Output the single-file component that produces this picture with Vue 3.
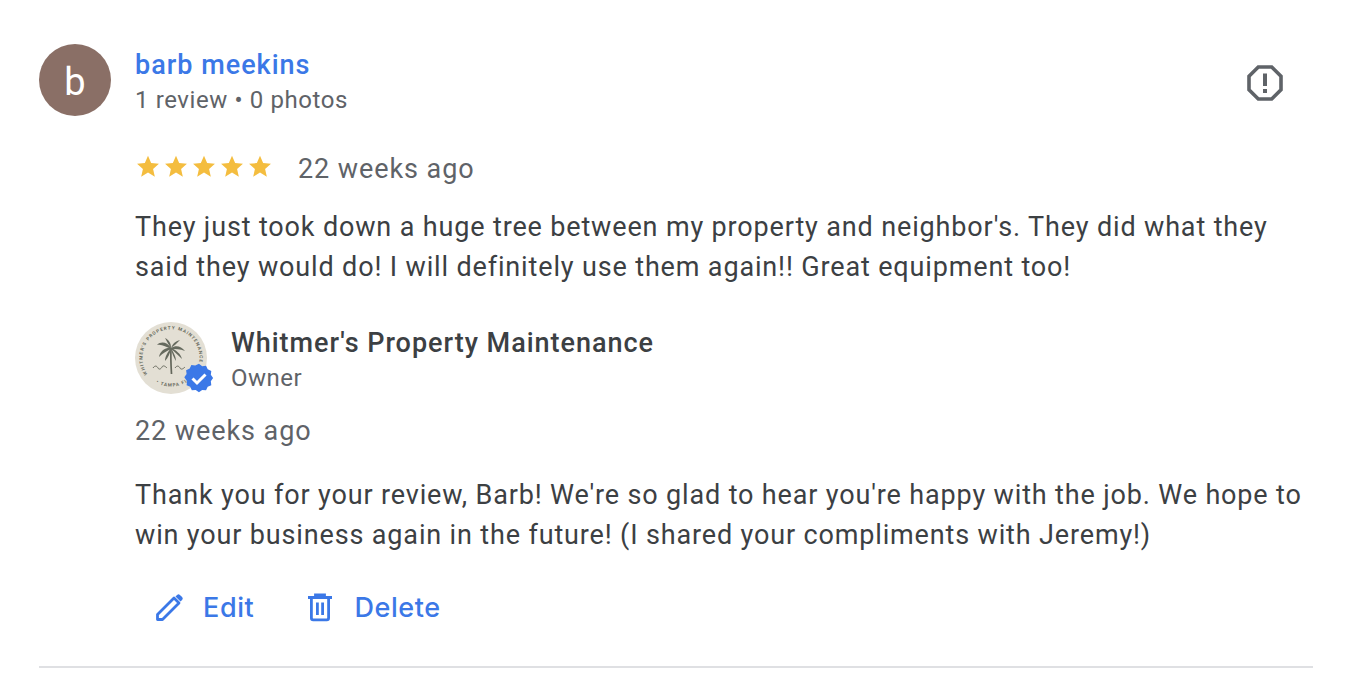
<script setup>
const stars = [0, 1, 2, 3, 4]
const starPath = 'M12 2.6l2.9 6.7 7.2.7-5.4 4.8 1.6 7.1L12 17.9l-6.3 4 1.6-7.1L1.9 10l7.2-.7z'
</script>

<template>
  <div class="page">
    <article class="review">
      <header class="head">
        <div class="avatar">b</div>
        <div class="who">
          <a class="name">barb meekins</a>
          <div class="meta">1 review • 0 photos</div>
        </div>
        <svg class="flag" viewBox="0 0 36 36" width="36" height="36">
          <path d="M11.3 2h13.4L34 11.3v13.4L24.7 34H11.3L2 24.7V11.3z" fill="none" stroke="#5f6368" stroke-width="3.6" />
          <rect x="16" y="8.5" width="4" height="12.5" fill="#5f6368" />
          <rect x="16" y="24" width="4" height="4" fill="#5f6368" />
        </svg>
      </header>

      <div class="body">
        <div class="rating">
          <div class="stars">
            <svg v-for="s in stars" :key="s" viewBox="0 0 24 24" width="26" height="26">
              <path :d="starPath" fill="#f4bd3f" />
            </svg>
          </div>
          <span class="when">22 weeks ago</span>
        </div>

        <p class="text">They just took down a huge tree between my property and neighbor's. They did what they said they would do! I will definitely use them again!! Great equipment too!</p>

        <div class="owner">
          <div class="logo">
            <svg viewBox="0 0 72 72" width="72" height="72">
              <defs>
                <path id="ring-top" d="M12.5 52A28.5 28.5 0 1 1 59.5 52" />
                <path id="ring-bottom" d="M18 58.5A29.5 29.5 0 0 0 54 58.5" />
              </defs>
              <circle cx="36" cy="36" r="36" fill="#e3dfd4" />
              <text class="ring-text"><textPath href="#ring-top" startOffset="0">WHITMER'S PROPERTY MAINTENANCE</textPath><textPath href="#ring-bottom" startOffset="10%">• TAMPA FL</textPath></text>
              <g opacity="0.85">
                <path d="M36.5 52 C36 44 35.5 36 36 26" stroke="#4f5347" stroke-width="1.7" fill="none" />
                <path d="M36 26 C32 20 26 19 22 23 C27 22 31 25 36 27Z M36 26 C31 25 25 29 24 35 C28 31 32 29 36 27Z M36 26 C33 30 30 34 30 39 C33 36 35 31 36 27Z M36 26 C36 21 34 18 30 16 C32 20 34 23 36 26Z M36 26 C38 21 41 19 45 18 C42 21 39 24 36 26Z M36 26 C41 23 46 24 50 29 C45 27 40 27 36 27Z M36 26 C41 28 46 32 47 37 C43 33 40 30 36 27Z M36 26 C38 30 41 34 41 39 C39 36 37 31 36 27Z" fill="#50564a" />
              </g>
              <path d="M18 46c2-3 4-2 5 0s3 1 4-1 3-1 5 1M40 46c2-3 4-2 5 0s3 1 5-1" fill="none" stroke="#6a6c60" stroke-width="1" />
            </svg>
            <svg class="badge" viewBox="0 0 30 30" width="30" height="30">
              <path d="M15 .8l3.4 2.4 4.1-.5 1.7 3.8 3.8 1.7-.5 4.1 2.4 3.4-2.4 3.4.5 4.1-3.8 1.7-1.7 3.8-4.1-.5-3.4 2.4-3.4-2.4-4.1.5-1.7-3.8-3.8-1.7.5-4.1L-.4 15l2.4-3.4-.5-4.1 3.8-1.7 1.7-3.8 4.1.5z" fill="#3b78e7" transform="translate(.7 .1) scale(.95)" />
              <path d="M8.5 15.5l4.5 4.5 8.5-8.5" fill="none" stroke="#fff" stroke-width="3" />
            </svg>
          </div>
          <div class="owner-who">
            <div class="biz">Whitmer's Property Maintenance</div>
            <div class="role">Owner</div>
          </div>
        </div>

        <div class="reply-when">22 weeks ago</div>

        <p class="text reply">Thank you for your review, Barb! We're so glad to hear you're happy with the job. We hope to win your business again in the future! (I shared your compliments with Jeremy!)</p>

        <div class="actions">
          <button class="action">
            <svg viewBox="0 0 32 32" width="32" height="32">
              <path d="M4.5 28.5v-5L21 7l5 5L9.5 28.5z" fill="none" stroke="#3b78e7" stroke-width="2.8" stroke-linejoin="round" />
              <path d="M22.5 5.5l1.6-1.6a2 2 0 0 1 2.8 0l2.2 2.2a2 2 0 0 1 0 2.8l-1.6 1.6z" fill="#3b78e7" />
            </svg>
            <span class="label">Edit</span>
          </button>
          <button class="action">
            <svg viewBox="0 0 32 32" width="32" height="32">
              <path d="M7.4 8v19a1.8 1.8 0 0 0 1.8 1.8h13.6a1.8 1.8 0 0 0 1.8-1.8V8" fill="none" stroke="#3b78e7" stroke-width="2.8" />
              <path d="M4 6.5h24M11.5 6.5V4h9v2.5M13.4 11.5v12.5M18.6 11.5v12.5" fill="none" stroke="#3b78e7" stroke-width="2.8" />
            </svg>
            <span class="label">Delete</span>
          </button>
        </div>
      </div>
    </article>
  </div>
</template>

<style>
html, body { margin: 0; background: #fff; }
</style>

<style scoped>
.page {
  width: 1357px;
  height: 686px;
  overflow: hidden;
  box-sizing: border-box;
  padding: 44px 44px 0 39px;
  font-family: Roboto, "Liberation Sans", sans-serif;
  color: #3c4043;
}
.review {
  height: 624px;
  box-sizing: border-box;
  border-bottom: 2px solid #dfe0e3;
}
.head {
  display: flex;
  align-items: flex-start;
  height: 72px;
}
.avatar {
  width: 72px;
  height: 72px;
  flex: none;
  border-radius: 50%;
  background: #8a6f66;
  color: #fff;
  font-size: 38px;
  line-height: 76px;
  text-align: center;
}
.who {
  margin-left: 24px;
  flex: 1;
  min-width: 0;
}
.name {
  display: block;
  margin-top: 1px;
  color: #3b78e7;
  font-size: 27px;
  font-weight: 500;
  line-height: 40px;
  letter-spacing: 1px;
}
.meta {
  margin-top: -3px;
  color: #5f6368;
  font-size: 24px;
  line-height: 36px;
  letter-spacing: 0.6px;
}
.flag {
  flex: none;
  margin: 21px 30px 0 0;
}
.body {
  margin-left: 96px;
}
.rating {
  display: flex;
  align-items: center;
  margin-top: 31px;
  height: 44px;
}
.stars {
  display: flex;
  gap: 2px;
  width: 163px;
  margin-top: -6px;
}
.when, .reply-when {
  color: #5f6368;
  font-size: 27px;
  letter-spacing: 0.92px;
}
.text {
  margin: 16px 0 0;
  font-size: 27px;
  line-height: 40px;
  letter-spacing: 0.85px;
  width: 1172px;
}
.owner {
  display: flex;
  align-items: center;
  margin-top: 35px;
  height: 72px;
}
.logo {
  position: relative;
  width: 72px;
  height: 72px;
  flex: none;
  margin-top: -1px;
}
.logo > svg:first-child {
  display: block;
}
.ring-text {
  font-size: 4.6px;
  font-weight: 700;
  fill: #6a6c60;
  letter-spacing: 0.95px;
}
.badge {
  position: absolute;
  left: 49px;
  top: 41px;
}
.owner-who {
  margin-left: 24px;
}
.biz {
  font-size: 27px;
  font-weight: 500;
  line-height: 40px;
  letter-spacing: 0.98px;
}
.role {
  margin-top: -1px;
  color: #5f6368;
  font-size: 24px;
  line-height: 32px;
  letter-spacing: 0.5px;
}
.reply-when {
  margin-top: 17px;
  line-height: 40px;
}
.reply {
  margin-top: 24px;
}
.actions {
  display: flex;
  gap: 50px;
  margin-top: 31px;
  margin-left: 18px;
}
.action {
  display: flex;
  align-items: center;
  gap: 18px;
  padding: 0;
  border: 0;
  background: none;
  color: #3b78e7;
  font-family: Inter, sans-serif;
  font-size: 27px;
  font-weight: 500;
  letter-spacing: 0.6px;
  line-height: 40px;
}
.label {
  padding-top: 2px;
}
</style>
